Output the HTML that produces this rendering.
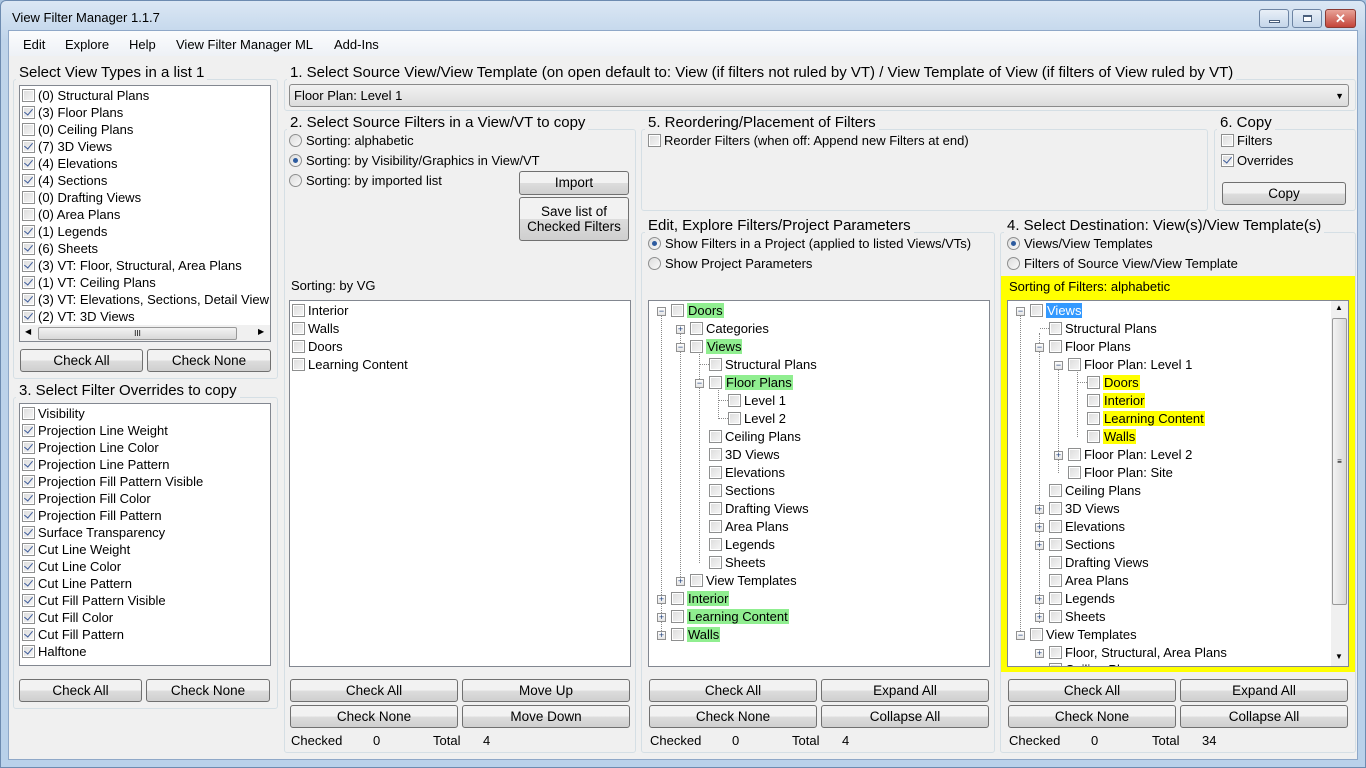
<!DOCTYPE html>
<html><head><meta charset="utf-8"><style>
*{box-sizing:border-box;margin:0;padding:0}
body{width:1366px;height:768px;overflow:hidden;background:#a9c4e0;font-family:"Liberation Sans",sans-serif;font-size:13px;color:#000;position:relative}
.a{position:absolute}
.win{left:0;top:0;width:1366px;height:768px;background:linear-gradient(#dbe7f4,#bfd4ea 40px,#b9d1ea);border:1px solid #6d8bb0;border-radius:6px 6px 0 0}
.client{left:8px;top:30px;width:1350px;height:730px;background:#f0f0f0;border:1px solid #8fa8c8}
.menu{left:9px;top:31px;width:1348px;height:25px;background:linear-gradient(#fbfcfd,#eef1f6)}
.menu span{position:absolute;top:6px}
.grp{position:absolute;border:1px solid #d5dfe5;border-radius:3px}
.gt{position:absolute;background:#f0f0f0;padding:0 3px;font-size:15px;line-height:18px;margin-top:1px}
.box{position:absolute;background:#fff;border:1px solid #828790}
.r{position:absolute;height:18px;line-height:18px;white-space:nowrap;margin-top:1px}
.cb{display:inline-block;width:13px;height:13px;border:1px solid #8e8f8f;background:linear-gradient(135deg,#dcdcdc,#f6f6f6);vertical-align:-2px;margin-right:3px;position:relative;box-shadow:inset 0 0 0 1px #fff}
.k::after{content:"";position:absolute;left:3px;top:0px;width:4px;height:7px;border:solid #3b5a9a;border-width:0 1.5px 1.5px 0;transform:rotate(40deg)}
.rd{display:inline-block;width:13px;height:13px;border:1px solid #8e8f8f;border-radius:50%;background:linear-gradient(135deg,#dcdcdc,#fafafa);vertical-align:-2px;margin-right:4px;position:relative}
.rs::after{content:"";position:absolute;left:3px;top:3px;width:5px;height:5px;border-radius:50%;background:#2d5b9f}
.btn{position:absolute;border:1px solid #707070;border-radius:3px;background:linear-gradient(#f2f2f2 50%,#dddddd 50%,#cfcfcf);text-align:center;line-height:21px;font-size:13.5px}
.g{background:#90ee90;padding:0 1px}
.y{background:#ffff00;padding:0 1px}
.sel{background:#3399ff;color:#fff;padding:0 1px}
.ex{position:absolute;width:9px;height:9px;border:1px solid #919191;background:linear-gradient(#fff,#e4e4e4);font-size:9px;line-height:7px;text-align:center;color:#1d3e7a;margin-top:1px}
.vl{position:absolute;border-left:1px dotted #888;width:0}
.hl{position:absolute;border-top:1px dotted #888;height:0}
</style></head><body>
<div class="a win"></div>
<div class="a" style="left:12px;top:10px;font-size:13px">View Filter Manager 1.1.7</div>
<div class="a" style="left:1259px;top:9px;width:30px;height:19px;border:1px solid #6d84a3;border-radius:3px;background:linear-gradient(#e8eff7,#c5d6ea)"><div class="a" style="left:9px;top:10px;width:11px;height:3px;border:1px solid #4a5f7c;background:#fff"></div></div>
<div class="a" style="left:1292px;top:9px;width:30px;height:19px;border:1px solid #6d84a3;border-radius:3px;background:linear-gradient(#e8eff7,#c5d6ea)"><div class="a" style="left:10px;top:5px;width:9px;height:7px;border:1px solid #4a5f7c;border-top-width:2px;background:#fff"></div></div>
<div class="a" style="left:1325px;top:9px;width:31px;height:19px;border:1px solid #8a3a33;border-radius:3px;background:linear-gradient(#e8a398,#c4453a);color:#fff;text-align:center;font-weight:bold;line-height:17px;font-size:13px">✕</div>
<div class="a client"></div>
<div class="a menu"><span style="left:14px">Edit</span><span style="left:56px">Explore</span><span style="left:120px">Help</span><span style="left:167px">View Filter Manager ML</span><span style="left:325px">Add-Ins</span></div>

<div class="grp" style="left:13px;top:79px;width:265px;height:300px"></div>
<div class="gt" style="left:16px;top:63px">Select View Types in a list 1</div>
<div class="box" style="left:19px;top:85px;width:252px;height:257px"></div>
<div class="r" style="left:22px;top:86px"><i class="cb"></i>(0) Structural Plans</div>
<div class="r" style="left:22px;top:103px"><i class="cb k"></i>(3) Floor Plans</div>
<div class="r" style="left:22px;top:120px"><i class="cb"></i>(0) Ceiling Plans</div>
<div class="r" style="left:22px;top:137px"><i class="cb k"></i>(7) 3D Views</div>
<div class="r" style="left:22px;top:154px"><i class="cb k"></i>(4) Elevations</div>
<div class="r" style="left:22px;top:171px"><i class="cb k"></i>(4) Sections</div>
<div class="r" style="left:22px;top:188px"><i class="cb"></i>(0) Drafting Views</div>
<div class="r" style="left:22px;top:205px"><i class="cb"></i>(0) Area Plans</div>
<div class="r" style="left:22px;top:222px"><i class="cb k"></i>(1) Legends</div>
<div class="r" style="left:22px;top:239px"><i class="cb k"></i>(6) Sheets</div>
<div class="r" style="left:22px;top:256px"><i class="cb k"></i>(3) VT: Floor, Structural, Area Plans</div>
<div class="r" style="left:22px;top:273px"><i class="cb k"></i>(1) VT: Ceiling Plans</div>
<div class="r" style="left:22px;top:290px;width:247px;overflow:hidden"><i class="cb k"></i>(3) VT: Elevations, Sections, Detail Views</div>
<div class="r" style="left:22px;top:307px"><i class="cb k"></i>(2) VT: 3D Views</div>
<div class="a" style="left:20px;top:325px;width:250px;height:16px;background:#f0f0f0"></div>
<div class="a" style="left:38px;top:327px;width:199px;height:13px;border:1px solid #999;border-radius:2px;background:linear-gradient(#f3f3f3,#d8d8d8);font-size:8px;text-align:center;line-height:11px">III</div>
<div class="a" style="left:25px;top:327px;font-size:8px">◀</div><div class="a" style="left:258px;top:327px;font-size:8px">▶</div>
<div class="btn" style="left:20px;top:349px;width:123px;height:23px">Check All</div>
<div class="btn" style="left:147px;top:349px;width:124px;height:23px">Check None</div>

<div class="grp" style="left:13px;top:397px;width:265px;height:312px"></div>
<div class="gt" style="left:16px;top:381px">3. Select Filter Overrides to copy</div>
<div class="box" style="left:19px;top:403px;width:252px;height:263px"></div>
<div class="r" style="left:22px;top:404px"><i class="cb"></i>Visibility</div>
<div class="r" style="left:22px;top:421px"><i class="cb k"></i>Projection Line Weight</div>
<div class="r" style="left:22px;top:438px"><i class="cb k"></i>Projection Line Color</div>
<div class="r" style="left:22px;top:455px"><i class="cb k"></i>Projection Line Pattern</div>
<div class="r" style="left:22px;top:472px"><i class="cb k"></i>Projection Fill Pattern Visible</div>
<div class="r" style="left:22px;top:489px"><i class="cb k"></i>Projection Fill Color</div>
<div class="r" style="left:22px;top:506px"><i class="cb k"></i>Projection Fill Pattern</div>
<div class="r" style="left:22px;top:523px"><i class="cb k"></i>Surface Transparency</div>
<div class="r" style="left:22px;top:540px"><i class="cb k"></i>Cut Line Weight</div>
<div class="r" style="left:22px;top:557px"><i class="cb k"></i>Cut Line Color</div>
<div class="r" style="left:22px;top:574px"><i class="cb k"></i>Cut Line Pattern</div>
<div class="r" style="left:22px;top:591px"><i class="cb k"></i>Cut Fill Pattern Visible</div>
<div class="r" style="left:22px;top:608px"><i class="cb k"></i>Cut Fill Color</div>
<div class="r" style="left:22px;top:625px"><i class="cb k"></i>Cut Fill Pattern</div>
<div class="r" style="left:22px;top:642px"><i class="cb k"></i>Halftone</div>
<div class="btn" style="left:19px;top:679px;width:123px;height:23px">Check All</div>
<div class="btn" style="left:146px;top:679px;width:124px;height:23px">Check None</div>

<div class="grp" style="left:284px;top:79px;width:1072px;height:32px"></div>
<div class="gt" style="left:287px;top:63px">1. Select Source View/View Template (on open default to: View (if filters not ruled by VT) / View Template of View (if filters of View ruled by VT)</div>
<div class="a" style="left:289px;top:84px;width:1060px;height:23px;border:1px solid #8a8a8a;border-radius:3px;background:linear-gradient(#f2f2f2,#dcdcdc);padding-left:4px;line-height:22px">Floor Plan: Level 1<span class="a" style="right:4px;top:0;font-size:9px">▼</span></div>

<div class="grp" style="left:284px;top:129px;width:352px;height:624px"></div>
<div class="gt" style="left:287px;top:113px">2. Select Source Filters in a View/VT to copy</div>
<div class="r" style="left:289px;top:131px"><i class="rd"></i>Sorting: alphabetic</div>
<div class="r" style="left:289px;top:151px"><i class="rd rs"></i>Sorting: by Visibility/Graphics in View/VT</div>
<div class="r" style="left:289px;top:171px"><i class="rd"></i>Sorting: by imported list</div>
<div class="btn" style="left:519px;top:171px;width:110px;height:24px">Import</div>
<div class="btn" style="left:519px;top:197px;width:110px;height:44px;line-height:15px;padding-top:6px">Save list of<br>Checked Filters</div>
<div class="r" style="left:291px;top:276px">Sorting: by VG</div>
<div class="box" style="left:289px;top:300px;width:342px;height:367px"></div>
<div class="r" style="left:292px;top:301px"><i class="cb"></i>Interior</div>
<div class="r" style="left:292px;top:319px"><i class="cb"></i>Walls</div>
<div class="r" style="left:292px;top:337px"><i class="cb"></i>Doors</div>
<div class="r" style="left:292px;top:355px"><i class="cb"></i>Learning Content</div>
<div class="btn" style="left:290px;top:679px;width:168px;height:23px">Check All</div>
<div class="btn" style="left:462px;top:679px;width:168px;height:23px">Move Up</div>
<div class="btn" style="left:290px;top:705px;width:168px;height:23px">Check None</div>
<div class="btn" style="left:462px;top:705px;width:168px;height:23px">Move Down</div>
<div class="r" style="left:291px;top:731px">Checked</div><div class="r" style="left:373px;top:731px">0</div>
<div class="r" style="left:433px;top:731px">Total</div><div class="r" style="left:483px;top:731px">4</div>

<div class="grp" style="left:641px;top:129px;width:567px;height:82px"></div>
<div class="gt" style="left:645px;top:113px">5. Reordering/Placement of Filters</div>
<div class="r" style="left:648px;top:131px"><i class="cb"></i>Reorder Filters (when off: Append new Filters at end)</div>

<div class="grp" style="left:1214px;top:129px;width:142px;height:82px"></div>
<div class="gt" style="left:1217px;top:113px">6. Copy</div>
<div class="r" style="left:1221px;top:131px"><i class="cb"></i>Filters</div>
<div class="r" style="left:1221px;top:151px"><i class="cb k"></i>Overrides</div>
<div class="btn" style="left:1222px;top:182px;width:124px;height:23px">Copy</div>

<div class="grp" style="left:641px;top:232px;width:354px;height:521px"></div>
<div class="gt" style="left:645px;top:216px">Edit, Explore Filters/Project Parameters</div>
<div class="r" style="left:648px;top:234px"><i class="rd rs"></i>Show Filters in a Project (applied to listed Views/VTs)</div>
<div class="r" style="left:648px;top:254px"><i class="rd"></i>Show Project Parameters</div>
<div class="box" style="left:648px;top:300px;width:342px;height:367px"></div>
<div class="vl" style="left:661px;top:315px;height:320px"></div>
<div class="vl" style="left:680px;top:333px;height:248px"></div>
<div class="vl" style="left:699px;top:351px;height:212px"></div>
<div class="vl" style="left:718px;top:387px;height:32px"></div>
<div class="ex" style="left:657px;top:306px">−</div>
<div class="r" style="left:671px;top:301px"><i class="cb"></i><span class="g">Doors</span></div>
<div class="ex" style="left:676px;top:324px">+</div>
<div class="r" style="left:690px;top:319px"><i class="cb"></i>Categories</div>
<div class="ex" style="left:676px;top:342px">−</div>
<div class="r" style="left:690px;top:337px"><i class="cb"></i><span class="g">Views</span></div>
<div class="hl" style="left:700px;top:364px;width:9px"></div>
<div class="r" style="left:709px;top:355px"><i class="cb"></i>Structural Plans</div>
<div class="ex" style="left:695px;top:378px">−</div>
<div class="r" style="left:709px;top:373px"><i class="cb"></i><span class="g">Floor Plans</span></div>
<div class="hl" style="left:719px;top:400px;width:9px"></div>
<div class="r" style="left:728px;top:391px"><i class="cb"></i>Level 1</div>
<div class="hl" style="left:719px;top:418px;width:9px"></div>
<div class="r" style="left:728px;top:409px"><i class="cb"></i>Level 2</div>
<div class="r" style="left:709px;top:427px"><i class="cb"></i>Ceiling Plans</div>
<div class="r" style="left:709px;top:445px"><i class="cb"></i>3D Views</div>
<div class="r" style="left:709px;top:463px"><i class="cb"></i>Elevations</div>
<div class="r" style="left:709px;top:481px"><i class="cb"></i>Sections</div>
<div class="r" style="left:709px;top:499px"><i class="cb"></i>Drafting Views</div>
<div class="r" style="left:709px;top:517px"><i class="cb"></i>Area Plans</div>
<div class="r" style="left:709px;top:535px"><i class="cb"></i>Legends</div>
<div class="r" style="left:709px;top:553px"><i class="cb"></i>Sheets</div>
<div class="ex" style="left:676px;top:576px">+</div>
<div class="r" style="left:690px;top:571px"><i class="cb"></i>View Templates</div>
<div class="ex" style="left:657px;top:594px">+</div>
<div class="r" style="left:671px;top:589px"><i class="cb"></i><span class="g">Interior</span></div>
<div class="ex" style="left:657px;top:612px">+</div>
<div class="r" style="left:671px;top:607px"><i class="cb"></i><span class="g">Learning Content</span></div>
<div class="ex" style="left:657px;top:630px">+</div>
<div class="r" style="left:671px;top:625px"><i class="cb"></i><span class="g">Walls</span></div>
<div class="btn" style="left:649px;top:679px;width:168px;height:23px">Check All</div>
<div class="btn" style="left:821px;top:679px;width:168px;height:23px">Expand All</div>
<div class="btn" style="left:649px;top:705px;width:168px;height:23px">Check None</div>
<div class="btn" style="left:821px;top:705px;width:168px;height:23px">Collapse All</div>
<div class="r" style="left:650px;top:731px">Checked</div><div class="r" style="left:732px;top:731px">0</div>
<div class="r" style="left:792px;top:731px">Total</div><div class="r" style="left:842px;top:731px">4</div>

<div class="grp" style="left:1000px;top:232px;width:356px;height:521px"></div>
<div class="gt" style="left:1004px;top:216px">4. Select Destination: View(s)/View Template(s)</div>
<div class="r" style="left:1007px;top:234px"><i class="rd rs"></i>Views/View Templates</div>
<div class="r" style="left:1007px;top:254px"><i class="rd"></i>Filters of Source View/View Template</div>
<div class="a" style="left:1001px;top:276px;width:354px;height:396px;background:#ffff00"></div>
<div class="r" style="left:1009px;top:277px">Sorting of Filters: alphabetic</div>
<div class="box" style="left:1007px;top:300px;width:342px;height:367px"></div>
<div class="a" style="left:1331px;top:301px;width:17px;height:365px;background:#f0f0f0"></div>
<div class="a" style="left:1332px;top:318px;width:15px;height:287px;border:1px solid #999;border-radius:2px;background:linear-gradient(90deg,#f3f3f3,#d8d8d8);font-size:8px;text-align:center;line-height:285px">≡</div>
<div class="a" style="left:1335px;top:303px;font-size:8px">▲</div><div class="a" style="left:1335px;top:652px;font-size:8px">▼</div>
<div class="vl" style="left:1020px;top:315px;height:320px"></div>
<div class="vl" style="left:1039px;top:333px;height:290px"></div>
<div class="vl" style="left:1058px;top:369px;height:104px"></div>
<div class="vl" style="left:1077px;top:369px;height:68px"></div>
<div class="ex" style="left:1016px;top:306px">−</div>
<div class="r" style="left:1030px;top:301px"><i class="cb"></i><span class="sel">Views</span></div>
<div class="hl" style="left:1040px;top:328px;width:9px"></div>
<div class="r" style="left:1049px;top:319px"><i class="cb"></i>Structural Plans</div>
<div class="ex" style="left:1035px;top:342px">−</div>
<div class="r" style="left:1049px;top:337px"><i class="cb"></i>Floor Plans</div>
<div class="ex" style="left:1054px;top:360px">−</div>
<div class="r" style="left:1068px;top:355px"><i class="cb"></i>Floor Plan: Level 1</div>
<div class="hl" style="left:1078px;top:382px;width:9px"></div>
<div class="r" style="left:1087px;top:373px"><i class="cb"></i><span class="y">Doors</span></div>
<div class="r" style="left:1087px;top:391px"><i class="cb"></i><span class="y">Interior</span></div>
<div class="r" style="left:1087px;top:409px"><i class="cb"></i><span class="y">Learning Content</span></div>
<div class="r" style="left:1087px;top:427px"><i class="cb"></i><span class="y">Walls</span></div>
<div class="ex" style="left:1054px;top:450px">+</div>
<div class="r" style="left:1068px;top:445px"><i class="cb"></i>Floor Plan: Level 2</div>
<div class="r" style="left:1068px;top:463px"><i class="cb"></i>Floor Plan: Site</div>
<div class="r" style="left:1049px;top:481px"><i class="cb"></i>Ceiling Plans</div>
<div class="ex" style="left:1035px;top:504px">+</div>
<div class="r" style="left:1049px;top:499px"><i class="cb"></i>3D Views</div>
<div class="ex" style="left:1035px;top:522px">+</div>
<div class="r" style="left:1049px;top:517px"><i class="cb"></i>Elevations</div>
<div class="ex" style="left:1035px;top:540px">+</div>
<div class="r" style="left:1049px;top:535px"><i class="cb"></i>Sections</div>
<div class="r" style="left:1049px;top:553px"><i class="cb"></i>Drafting Views</div>
<div class="r" style="left:1049px;top:571px"><i class="cb"></i>Area Plans</div>
<div class="ex" style="left:1035px;top:594px">+</div>
<div class="r" style="left:1049px;top:589px"><i class="cb"></i>Legends</div>
<div class="ex" style="left:1035px;top:612px">+</div>
<div class="r" style="left:1049px;top:607px"><i class="cb"></i>Sheets</div>
<div class="ex" style="left:1016px;top:630px">−</div>
<div class="r" style="left:1030px;top:625px"><i class="cb"></i>View Templates</div>
<div class="ex" style="left:1035px;top:648px">+</div>
<div class="r" style="left:1049px;top:643px"><i class="cb"></i>Floor, Structural, Area Plans</div>
<div class="a" style="left:1046px;top:662px;width:284px;height:4px;overflow:hidden"><div class="r" style="left:3px;top:-1px;margin:0"><i class="cb"></i>Ceiling Plans</div></div>
<div class="btn" style="left:1008px;top:679px;width:168px;height:23px">Check All</div>
<div class="btn" style="left:1180px;top:679px;width:168px;height:23px">Expand All</div>
<div class="btn" style="left:1008px;top:705px;width:168px;height:23px">Check None</div>
<div class="btn" style="left:1180px;top:705px;width:168px;height:23px">Collapse All</div>
<div class="r" style="left:1009px;top:731px">Checked</div><div class="r" style="left:1091px;top:731px">0</div>
<div class="r" style="left:1152px;top:731px">Total</div><div class="r" style="left:1202px;top:731px">34</div>
</body></html>
